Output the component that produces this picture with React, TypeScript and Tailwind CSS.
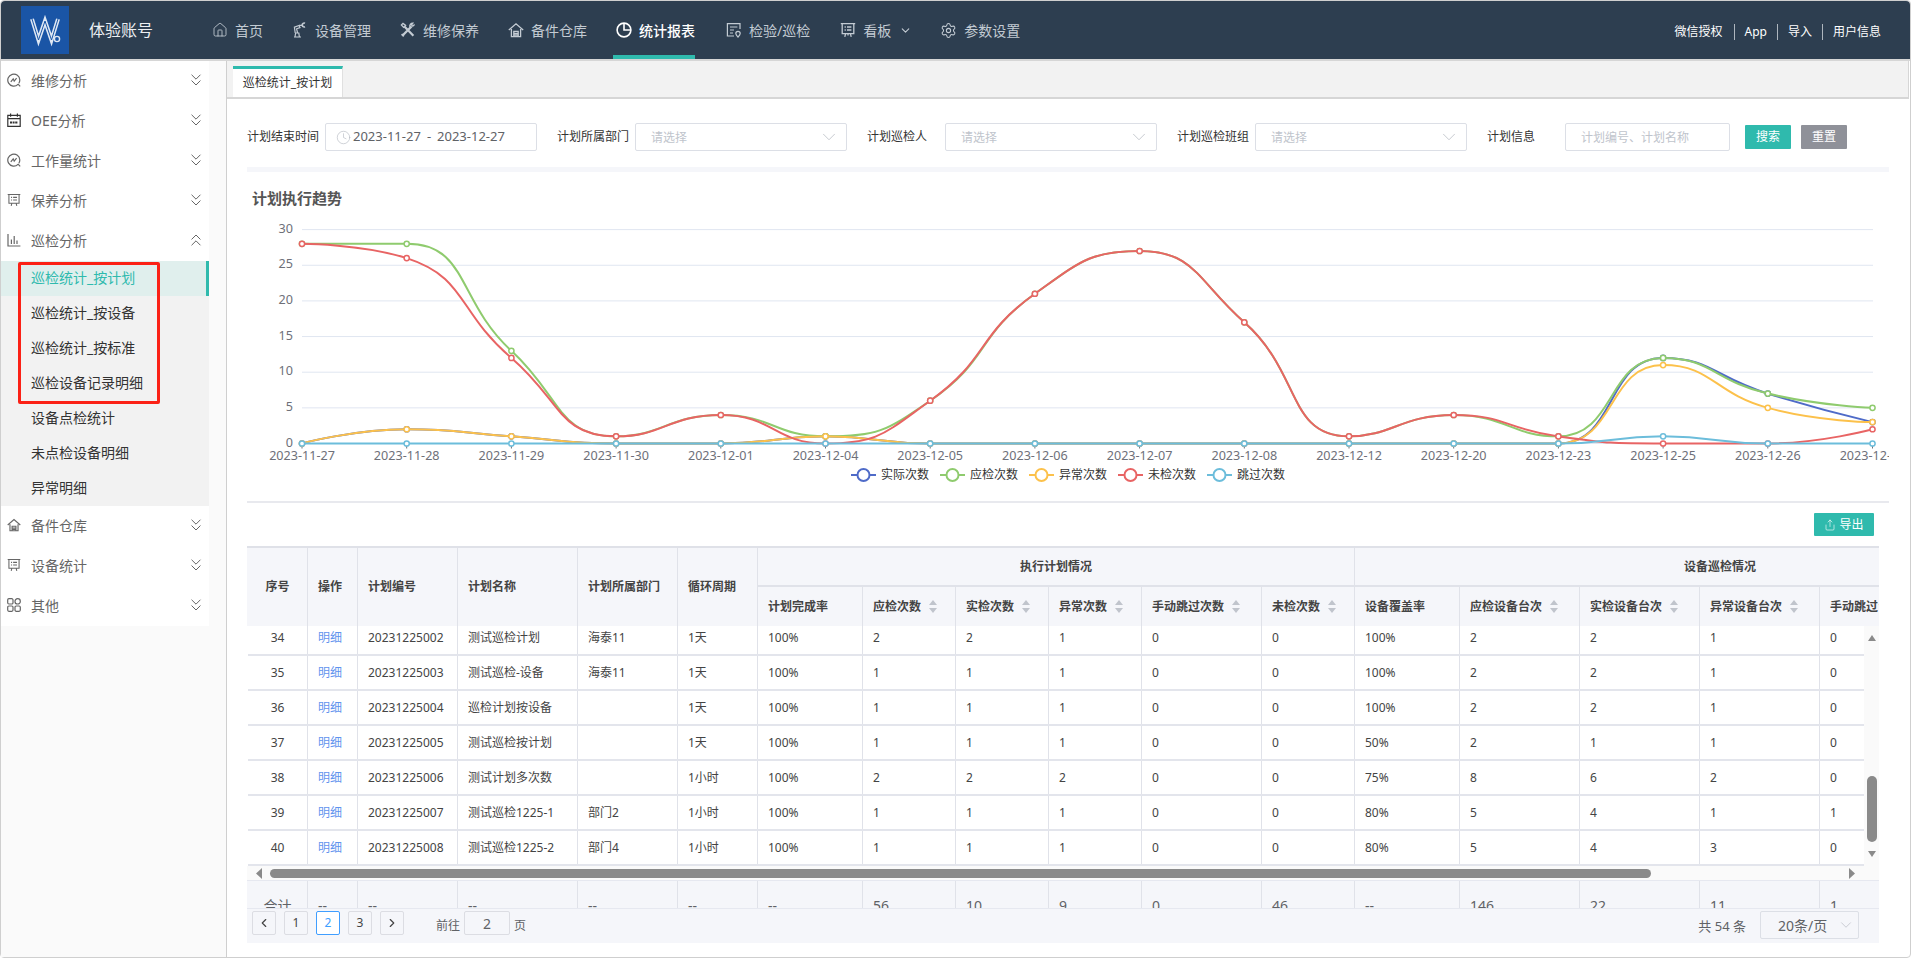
import { ChevronDown, ChevronLeft, ChevronRight, ChevronsDown, ChevronsUp, Clock, House, Settings, Share } from 'lucide-react';
import type { ReactNode } from 'react';

const FONT = 'font-["Noto_Sans","Noto_Sans_CJK_SC",sans-serif]';

function Ico({ children, size = 16, view = 16, sw = 1.2, className = '' }: { children: ReactNode; size?: number; view?: number; sw?: number; className?: string }) {
  return (
    <svg width={size} height={size} viewBox={`0 0 ${view} ${view}`} fill="none" stroke="currentColor" strokeWidth={sw} className={`shrink-0 ${className}`}>
      {children}
    </svg>
  );
}

const RobotIcon = () => (
  <Ico>
    <path d="M2 15h7M3 15l.6-4h3.2l.6 4M3.2 11L2.4 5.2 7 3.4l1 2.2-3.4 1.2L5.6 11" />
    <path d="M7 3.4h3.6M10.6 2v3" />
    <path d="M13 1.2a2 2 0 1 0 0 3.6" strokeWidth="1.6" />
  </Ico>
);
const ToolsIcon = () => (
  <Ico sw={2.2}>
    <path d="M4.4 4.4l9 9.4M11.6 4.4L2.8 13.2" />
    <path d="M1.4 3l1.6-1.6 2.6 2-2 2zM14.6 2.6l-1.8 1.6-1.4-1.2 1.4-1.8a3 3 0 0 0-3 3.6" strokeWidth="1.3" />
    <path d="M1.6 12.2l2.2 2.2" strokeWidth="1.8" />
  </Ico>
);
const WarehouseIcon = () => (
  <Ico sw={1.3}>
    <path d="M.8 8L8 1.8 15.2 8M3.4 7v7.6h9.2V7M5.8 14.6V9.4h4.4v5.2M5.8 11.4h4.4M5.8 13h4.4" />
  </Ico>
);
const PieIcon = () => (
  <Ico sw={1.6}>
    <circle cx="8" cy="8" r="6.9" />
    <path d="M8 1.4V8h6.6" />
  </Ico>
);
const InspectIcon = () => (
  <Ico sw={1.2}>
    <path d="M14 7V1.6H1.4v12.4H8M4 5h7.4M4 8h4M4 11h3" />
    <path d="M12 15.2c-1.6-1.6-2.2-2.6-2.2-3.6a2.2 2.2 0 1 1 4.4 0c0 1-.6 2-2.2 3.6z" />
  </Ico>
);
const BoardIcon = () => (
  <Ico sw={1.3}>
    <path d="M.8 1.6h14.4M2.2 1.6v10h11.6v-10M5.6 11.6l-.8 3.2M10.4 11.6l.8 3.2M8 11.6v2" />
    <path d="M4.6 5h1.2M7 5h4.4M4.6 8h1.2M7 8h4.4" />
  </Ico>
);
const AnalysisIcon = () => (
  <Ico size={14} view={14}>
    <path d="M11 11.4A6 6 0 1 1 12.8 7c0 1.2-.3 2.2-.9 3.2M10.8 10.8l2.4 2.6" />
    <path d="M3.8 8.8l2.4-3 1 2.4 2.4-3" />
  </Ico>
);
const CalendarIcon = () => (
  <Ico size={14} view={14} className="text-[#333]">
    <path d="M.8 2.4h12.4v11H.8zM3.6.4v3.4M10.4.4v3.4M.8 5.6h12.4" />
    <path d="M3 9.4h8" strokeWidth="2" strokeDasharray="2 .6" />
  </Ico>
);
const BarsIcon = () => (
  <Ico size={14} view={14}>
    <path d="M1 1v12h12.4M4.4 11V6.4M7.2 11V3M10 11V7.6" />
  </Ico>
);
const GridIcon = () => (
  <Ico size={14} view={14}>
    <rect x=".7" y=".7" width="5.3" height="5.3" rx="1.2" />
    <rect x="8" y=".7" width="5.3" height="5.3" rx="2.6" />
    <rect x=".7" y="8" width="5.3" height="5.3" rx="1.2" />
    <rect x="8" y="8" width="5.3" height="5.3" rx="1.2" />
  </Ico>
);

function Logo() {
  return (
    <div className="h-[48px] w-[48px] shrink-0 bg-[#1a55a6]">
      <svg width="48" height="48" viewBox="0 0 48 48" fill="none">
        <path d="M11 13l6.5 21L24 15l6.5 19L37 13" stroke="#dfe8f4" strokeWidth="4" />
        <path d="M11 13l6.5 21L24 15l6.5 19L37 13" stroke="#1a55a6" strokeWidth="1" />
        <circle cx="36" cy="33" r="2.6" stroke="#dfe8f4" strokeWidth="1.4" />
      </svg>
    </div>
  );
}

function TopBar() {
  const item = 'flex h-full items-center gap-[7px] border-b-4 pl-[3px] pt-1 text-[14px]';
  const off = `${item} border-transparent text-[#c3cbd3]`;
  return (
    <header className="flex h-[58px] shrink-0 items-center rounded-t-[4px] bg-[#2d3e50]">
      <div className="ml-[20px] flex items-center">
        <Logo />
        <span className="ml-[20px] text-[16px] text-[#eceff2]">体验账号</span>
      </div>
      <nav className="ml-[56px] flex h-full items-center gap-[26px]">
        <div className={off}><House size={16} strokeWidth={1.3} />首页</div>
        <div className={off}><RobotIcon />设备管理</div>
        <div className={off}><ToolsIcon />维修保养</div>
        <div className={off}><WarehouseIcon />备件仓库</div>
        <div className={`${item} border-[#2fbaad] font-medium text-white`}><PieIcon />统计报表</div>
        <div className={`${off} ml-[2px]`}><InspectIcon />检验/巡检</div>
        <div className={`${off} ml-[1px]`}><BoardIcon />看板<ChevronDown size={13} className="ml-[1px]" /></div>
        <div className={`${off} -ml-[1px]`}><Settings size={17} strokeWidth={1.5} />参数设置</div>
      </nav>
      <div className="ml-auto mr-[29px] flex items-center pt-[3px] text-[12px] text-white">
        <span className="pr-[11px]">微信授权</span>
        <span className="border-l border-[#aeb6be] px-[10px] leading-[16px]">App</span>
        <span className="border-l border-[#aeb6be] px-[10px] leading-[16px]">导入</span>
        <span className="border-l border-[#aeb6be] pl-[10px] leading-[16px]">用户信息</span>
      </div>
    </header>
  );
}

function MenuRow({ icon, label, open }: { icon: ReactNode; label: string; open?: boolean }) {
  return (
    <div className="flex h-[40px] items-center pb-[2px] pl-[6px] pr-[3px] text-[14px] text-[#666]">
      <span className="flex w-[24px] text-[#666]">{icon}</span>
      <span>{label}</span>
      {open ? <ChevronsUp size={20} strokeWidth={1.2} className="ml-auto" /> : <ChevronsDown size={20} strokeWidth={1.2} className="ml-auto" />}
    </div>
  );
}

const subMenu = ['巡检统计_按设备', '巡检统计_按标准', '巡检设备记录明细', '设备点检统计', '未点检设备明细', '异常明细'];

function Sidebar() {
  return (
    <aside className="w-[226px] shrink-0 border-r border-[#cfcfcf] bg-[#fafafa]">
      <div className="w-[208px] bg-white">
        <MenuRow icon={<AnalysisIcon />} label="维修分析" />
        <MenuRow icon={<CalendarIcon />} label="OEE分析" />
        <MenuRow icon={<AnalysisIcon />} label="工作量统计" />
        <MenuRow icon={<Ico size={14} view={16}><path d="M.8 1.6h14.4M2.2 1.6v10h11.6v-10M5.6 11.6l-.8 3.2M10.4 11.6l.8 3.2M4.6 5h1.2M7 5h4.4M4.6 8h1.2M7 8h4.4" /></Ico>} label="保养分析" />
        <MenuRow icon={<BarsIcon />} label="巡检分析" open />
        <div className="relative bg-[#f2f2f2]">
          <div className="flex h-[35px] items-center border-r-[3px] border-[#2fbaad] bg-[#e0efed] pb-[2px] pl-[30px] text-[14px] text-[#2fbaad]">巡检统计_按计划</div>
          {subMenu.map((s) => (
            <div key={s} className="flex h-[35px] items-center pb-[2px] pl-[30px] text-[14px] text-[#333]">{s}</div>
          ))}
          <div className="absolute left-[17px] top-px h-[142px] w-[142px] rounded-[2px] border-[3px] border-[#fb2116]" />
        </div>
        <MenuRow icon={<Ico size={14} view={16} sw={1.3}><path d="M.8 8L8 1.8 15.2 8M3.4 7v7.6h9.2V7M5.8 14.6V9.4h4.4v5.2M5.8 11.4h4.4M5.8 13h4.4" /></Ico>} label="备件仓库" />
        <MenuRow icon={<Ico size={14} view={16}><path d="M.8 1.6h14.4M2.2 1.6v10h11.6v-10M5.6 11.6l-.8 3.2M10.4 11.6l.8 3.2M4.6 5h1.2M7 5h4.4M4.6 8h1.2M7 8h4.4" /></Ico>} label="设备统计" />
        <MenuRow icon={<GridIcon />} label="其他" />
      </div>
    </aside>
  );
}

function Field({ label, children, wide }: { label: string; children: ReactNode; wide?: boolean }) {
  return (
    <div className="flex items-center gap-[6px]">
      <span className="w-[72px] whitespace-nowrap text-[12px] text-[#333]">{label}</span>
      <div className={`flex h-[28px] items-center rounded-[2px] border border-[#dcdfe6] bg-white text-[12px] ${wide ? 'w-[212px]' : 'w-[165px]'}`}>{children}</div>
    </div>
  );
}

function SelectBox() {
  return (
    <>
      <span className="pl-[15px] pt-px text-[#c0c4cc]">请选择</span>
      <ChevronDown size={22} strokeWidth={0.8} className="ml-auto mr-[6px] text-[#b4b8c0]" />
    </>
  );
}

function Filters() {
  return (
    <div className="mt-[24px] flex items-center gap-[20px]">
      <Field label="计划结束时间" wide>
        <Clock size={15} strokeWidth={1} className="ml-[10px] text-[#b4b8c0]" />
        <span className="ml-[2px] text-[13px] text-[#606266]">2023-11-27</span>
        <span className="mx-[6px] text-[13px] text-[#606266]">-</span>
        <span className="text-[13px] text-[#606266]">2023-12-27</span>
      </Field>
      <Field label="计划所属部门" wide><SelectBox /></Field>
      <Field label="计划巡检人" wide><SelectBox /></Field>
      <Field label="计划巡检班组" wide><SelectBox /></Field>
      <Field label="计划信息">
        <span className="pl-[15px] pt-px text-[#c0c4cc]">计划编号、计划名称</span>
      </Field>
      <div className="-ml-[5px] flex gap-[10px]">
        <button className="h-[24px] w-[46px] rounded-[1px] bg-[#2fbaad] text-[12px] text-white">搜索</button>
        <button className="h-[24px] w-[46px] rounded-[1px] bg-[#8f9199] text-[12px] text-white">重置</button>
      </div>
    </div>
  );
}

const cats = ['2023-11-27', '2023-11-28', '2023-11-29', '2023-11-30', '2023-12-01', '2023-12-04', '2023-12-05', '2023-12-06', '2023-12-07', '2023-12-08', '2023-12-12', '2023-12-20', '2023-12-23', '2023-12-25', '2023-12-26', '2023-12-27'];

const series = [
  { name: '实际次数', color: '#4f6bc8', data: [0, 2, 1, 0, 0, 1, 0, 0, 0, 0, 0, 0, 0, 12, 7, 3] },
  { name: '应检次数', color: '#8fcb6e', data: [28, 28, 13, 1, 4, 1, 6, 21, 27, 17, 1, 4, 1, 12, 7, 5] },
  { name: '异常次数', color: '#fcc14b', data: [0, 2, 1, 0, 0, 1, 0, 0, 0, 0, 0, 0, 0, 11, 5, 3] },
  { name: '未检次数', color: '#e86464', data: [28, 26, 12, 1, 4, 0, 6, 21, 27, 17, 1, 4, 1, 0, 0, 2] },
  { name: '跳过次数', color: '#6cbddb', data: [0, 0, 0, 0, 0, 0, 0, 0, 0, 0, 0, 0, 0, 1, 0, 0] },
];

const X0 = 302;
const XSTEP = 104.7;
const Y0 = 443.5;
const YUNIT = 7.13;

const px = (i: number) => X0 + i * XSTEP;
const py = (v: number) => Y0 - v * YUNIT;

// same control points as an echarts smooth line (smooth: 0.5)
function smoothPath(data: number[]) {
  const pts = data.map((v, i) => [px(i), py(v)]);
  const s = 0.5;
  const clamp = (v: number, a: number, b: number) => Math.max(Math.min(v, Math.max(a, b)), Math.min(a, b));
  let d = `M${pts[0][0]} ${pts[0][1]}`;
  let c0x = pts[0][0];
  let c0y = pts[0][1];
  for (let i = 1; i < pts.length; i++) {
    const [x, y] = pts[i];
    const [pxx, pyy] = pts[i - 1];
    if (i === pts.length - 1) {
      d += `C${c0x} ${c0y} ${x} ${y} ${x} ${y}`;
      break;
    }
    const [nx, ny] = pts[i + 1];
    let vx = nx - pxx;
    let vy = ny - pyy;
    const lp = Math.hypot(x - pxx, y - pyy);
    const ln = Math.hypot(nx - x, ny - y);
    const r = ln / (ln + lp);
    let ncx = clamp(x + vx * s * r, nx, x);
    let ncy = clamp(y + vy * s * r, ny, y);
    vx = ncx - x;
    vy = ncy - y;
    const cx = clamp(x - (vx * lp) / ln, pxx, x);
    const cy = clamp(y - (vy * lp) / ln, pyy, y);
    vx = x - cx;
    vy = y - cy;
    ncx = x + (vx * ln) / lp;
    ncy = y + (vy * ln) / lp;
    d += `C${c0x} ${c0y} ${cx} ${cy} ${x} ${y}`;
    c0x = ncx;
    c0y = ncy;
  }
  return d;
}

function Chart() {
  return (
    <svg width="1642" height="285" viewBox="247 215 1642 285" className={`mt-[7px] block ${FONT}`} fontSize="12">
      {[0, 5, 10, 15, 20, 25, 30].map((v) => (
        <g key={v}>
          <line x1={X0} x2={1873} y1={py(v)} y2={py(v)} stroke="#e0e6f1" />
          <text x={293} y={py(v) + 3} textAnchor="end" fontSize="12.6" fill="#6e7079">{v}</text>
        </g>
      ))}
      {cats.map((c, i) => (
        <g key={c}>
          <line x1={px(i)} x2={px(i)} y1={Y0} y2={Y0 + 5} stroke="#6e7079" />
          <text x={px(i)} y={460} textAnchor="middle" fontSize="12.6" fill="#6e7079">{c}</text>
        </g>
      ))}
      {series.map((s) => (
        <g key={s.name}>
          <path d={smoothPath(s.data)} fill="none" stroke={s.color} strokeWidth="2" />
          {s.data.map((v, i) => (
            <circle key={i} cx={px(i)} cy={py(v)} r="2.6" fill="#fff" stroke={s.color} strokeWidth="1.5" />
          ))}
        </g>
      ))}
      {series.map((s, i) => (
        <g key={s.name}>
          <line x1={851 + i * 89} x2={876 + i * 89} y1={475} y2={475} stroke={s.color} strokeWidth="2" />
          <circle cx={863.5 + i * 89} cy={475} r="6" fill="#fff" stroke={s.color} strokeWidth="2" />
          <text x={881 + i * 89} y={479} fill="#333">{s.name}</text>
        </g>
      ))}
    </svg>
  );
}

type Col = { w: string; label: string; sort?: boolean };
const lead: Col[] = [
  { w: 'w-[60px]', label: '序号' },
  { w: 'w-[50px]', label: '操作' },
  { w: 'w-[100px]', label: '计划编号' },
  { w: 'w-[120px]', label: '计划名称' },
  { w: 'w-[100px]', label: '计划所属部门' },
  { w: 'w-[80px]', label: '循环周期' },
];
const group1: Col[] = [
  { w: 'w-[105px]', label: '计划完成率' },
  { w: 'w-[93px]', label: '应检次数', sort: true },
  { w: 'w-[93px]', label: '实检次数', sort: true },
  { w: 'w-[93px]', label: '异常次数', sort: true },
  { w: 'w-[120px]', label: '手动跳过次数', sort: true },
  { w: 'w-[93px]', label: '未检次数', sort: true },
];
const group2: Col[] = [
  { w: 'w-[105px]', label: '设备覆盖率' },
  { w: 'w-[120px]', label: '应检设备台次', sort: true },
  { w: 'w-[120px]', label: '实检设备台次', sort: true },
  { w: 'w-[120px]', label: '异常设备台次', sort: true },
  { w: 'w-[120px]', label: '手动跳过台次', sort: true },
];
const allCols = [...lead, ...group1, ...group2];

const rows: string[][] = [
  ['34', '明细', '20231225002', '测试巡检计划', '海泰11', '1天', '100%', '2', '2', '1', '0', '0', '100%', '2', '2', '1', '0'],
  ['35', '明细', '20231225003', '测试巡检-设备', '海泰11', '1天', '100%', '1', '1', '1', '0', '0', '100%', '2', '2', '1', '0'],
  ['36', '明细', '20231225004', '巡检计划按设备', '', '1天', '100%', '1', '1', '1', '0', '0', '100%', '2', '2', '1', '0'],
  ['37', '明细', '20231225005', '测试巡检按计划', '', '1天', '100%', '1', '1', '1', '0', '0', '50%', '2', '1', '1', '0'],
  ['38', '明细', '20231225006', '测试计划多次数', '', '1小时', '100%', '2', '2', '2', '0', '0', '75%', '8', '6', '2', '0'],
  ['39', '明细', '20231225007', '测试巡检1225-1', '部门2', '1小时', '100%', '1', '1', '1', '0', '0', '80%', '5', '4', '1', '1'],
  ['40', '明细', '20231225008', '测试巡检1225-2', '部门4', '1小时', '100%', '1', '1', '1', '0', '0', '80%', '5', '4', '3', '0'],
];
const totals = ['合计', '--', '--', '--', '--', '--', '--', '56', '10', '9', '0', '46', '--', '146', '22', '11', '1'];

function SortCaret() {
  return (
    <svg width="10" height="13" viewBox="0 0 10 13" className="ml-[7px] shrink-0" fill="#c0c4cc">
      <path d="M5 0l4 5H1zM5 13L1 8h8z" />
    </svg>
  );
}

function HeadCell({ col, tall, center }: { col: Col; tall?: boolean; center?: boolean }) {
  return (
    <div className={`flex shrink-0 items-center whitespace-nowrap border-r border-[#e0e2e9] text-[12px] font-bold text-[#444] ${col.w} ${tall ? 'h-[78px]' : 'h-[39px]'} ${center ? 'justify-center' : 'pl-[10px]'}`}>
      {col.label}
      {col.sort && <SortCaret />}
    </div>
  );
}

function TableHead() {
  return (
    <div className="flex border-t-2 border-[#dfe1e8] bg-[#f5f6fa] pl-px">
      {lead.map((c, i) => (
        <HeadCell key={c.label} col={c} tall center={i === 0} />
      ))}
      <div className="w-[597px] shrink-0">
        <div className="flex h-[39px] items-center justify-center border-b-2 border-r border-[#e0e2e9] text-[12px] font-bold text-[#444]">执行计划情况</div>
        <div className="flex">{group1.map((c) => <HeadCell key={c.label} col={c} />)}</div>
      </div>
      <div className="w-[730px] shrink-0">
        <div className="flex h-[39px] items-center justify-center border-b-2 border-[#e0e2e9] text-[12px] font-bold text-[#444]">设备巡检情况</div>
        <div className="flex">{group2.map((c) => <HeadCell key={c.label} col={c} />)}</div>
      </div>
    </div>
  );
}

function TableBody() {
  return (
    <div className="flex h-[254px] bg-white">
      <div className="w-[1617px] shrink-0 overflow-hidden">
        <div className="-mt-[5px] pl-px">
          {rows.map((r) => (
            <div key={r[0]} className="flex h-[35px] w-max border-b-2 border-[#e3e5ec]">
              {r.map((v, i) => (
                <div key={i} className={`flex shrink-0 items-center whitespace-nowrap border-r border-[#e0e2e9] pt-px text-[12px] ${allCols[i].w} ${i === 0 ? 'justify-center' : 'pl-[10px]'} ${i === 1 ? 'text-[#5f93ee]' : 'text-[#444]'}`}>{v}</div>
              ))}
            </div>
          ))}
          <div className="-ml-px flex h-[14px] items-center bg-[#fafafa]">
            <svg width="8" height="11" viewBox="0 0 8 11" className="ml-[8px] shrink-0" fill="#8a8a8a"><path d="M7 0v11L1 5.5z" /></svg>
            <div className="ml-[7px] h-[9px] w-[1381px] rounded-[5px] bg-[#8a8a8a]" />
            <svg width="8" height="11" viewBox="0 0 8 11" className="ml-[197px] shrink-0" fill="#8a8a8a"><path d="M1 0v11l6-5.5z" /></svg>
          </div>
        </div>
      </div>
      <div className="flex h-[254px] w-[15px] flex-col items-center bg-[#fafafa]">
        <svg width="10" height="8" viewBox="0 0 10 8" className="mt-[8px]" fill="#8a8a8a"><path d="M5 1l4 6H1z" /></svg>
        <div className="mt-[134px] h-[66px] w-[10px] rounded-[5px] bg-[#8a8a8a]" />
        <svg width="10" height="8" viewBox="0 0 10 8" className="mt-[8px]" fill="#8a8a8a"><path d="M5 7L1 1h8z" /></svg>
      </div>
    </div>
  );
}

function TableFoot() {
  return (
    <div className="h-[28px] overflow-hidden border-t border-[#e6e8f0] bg-[#f5f6fa] pl-px">
      <div className="flex h-[48px]">
        {totals.map((v, i) => (
          <div key={i} className={`flex shrink-0 items-center border-r border-[#e0e2e9] text-[14px] text-[#606266] ${allCols[i].w} ${i === 0 ? 'justify-center' : 'pl-[10px]'}`}>{v}</div>
        ))}
      </div>
    </div>
  );
}

function PageBtn({ children, active }: { children: ReactNode; active?: boolean }) {
  return (
    <div className={`flex h-[24px] w-[24px] items-center justify-center rounded-[2px] border text-[12px] ${active ? 'border-[#409eff] bg-white text-[#409eff]' : 'border-[#dcdde3] bg-[#f5f6fa] text-[#444]'}`}>{children}</div>
  );
}

function Pager() {
  return (
    <div className="flex h-[35px] items-start border-t border-[#e6e8f0] bg-[#f5f6fa] pl-[5px] pt-[2px]">
      <div className="flex gap-[8px]">
        <PageBtn><ChevronLeft size={14} strokeWidth={2} /></PageBtn>
        <PageBtn>1</PageBtn>
        <PageBtn active>2</PageBtn>
        <PageBtn>3</PageBtn>
        <PageBtn><ChevronRight size={14} strokeWidth={2} /></PageBtn>
      </div>
      <span className="ml-[32px] mt-[6px] text-[12px] text-[#606266]">前往</span>
      <div className="ml-[4px] flex h-[24px] w-[46px] items-center justify-center rounded-[2px] border border-[#dcdde3] text-[14px] text-[#606266]">2</div>
      <span className="ml-[4px] mt-[6px] text-[12px] text-[#606266]">页</span>
      <span className="ml-auto mt-[6px] text-[13px] text-[#606266]">共 54 条</span>
      <div className="ml-[14px] mr-[20px] flex h-[28px] w-[99px] items-center rounded-[2px] border border-[#dcdfe6] pl-[17px] text-[14px] text-[#606266]">
        20条/页
        <ChevronDown size={18} strokeWidth={0.9} className="ml-auto mr-[3px] text-[#b4b8c0]" />
      </div>
    </div>
  );
}

export default function App() {
  return (
    <div className={`h-[958px] w-[1912px] overflow-hidden bg-white ${FONT}`}>
      <div className="flex h-[958px] w-[1911px] flex-col rounded-[4px] border border-[#cfcfcf]">
        <TopBar />
        <div className="flex min-h-0 flex-1 border-t-2 border-[#d6d6d6]">
          <Sidebar />
          <main className="min-w-0 flex-1">
            <div className="mr-[1px] flex h-[38px] items-end border-b-2 border-r border-[#d6d6d6] bg-[#f2f2f2] pl-[6px]">
              <div className="flex h-[31px] w-[110px] items-center justify-center border-r border-[#e0e0e0] border-t-[3px] border-t-[#2fbaad] bg-white text-[12px] text-[#333]">巡检统计_按计划</div>
            </div>
            <div className="w-[1662px] pl-[20px]">
              <Filters />
              <div className="mt-[16px] h-[5px] bg-[#f5f6fa]" />
              <h2 className="mt-[16px] h-[20px] pl-[5px] text-[15px] font-bold leading-[20px] text-[#555]">计划执行趋势</h2>
              <Chart />
              <div className="mt-px h-[2px] bg-[#e8e9ee]" />
              <div className="mr-[15px] mt-[10px] flex justify-end">
                <button className="flex h-[23px] w-[60px] items-center justify-center gap-[3px] rounded-[1px] bg-[#2fbaad] text-[12px] text-white"><Share size={12} strokeWidth={1.2} />导出</button>
              </div>
              <div className="mt-[10px] w-[1632px] overflow-hidden">
                <TableHead />
                <TableBody />
                <TableFoot />
                <Pager />
              </div>
            </div>
          </main>
        </div>
      </div>
    </div>
  );
}
